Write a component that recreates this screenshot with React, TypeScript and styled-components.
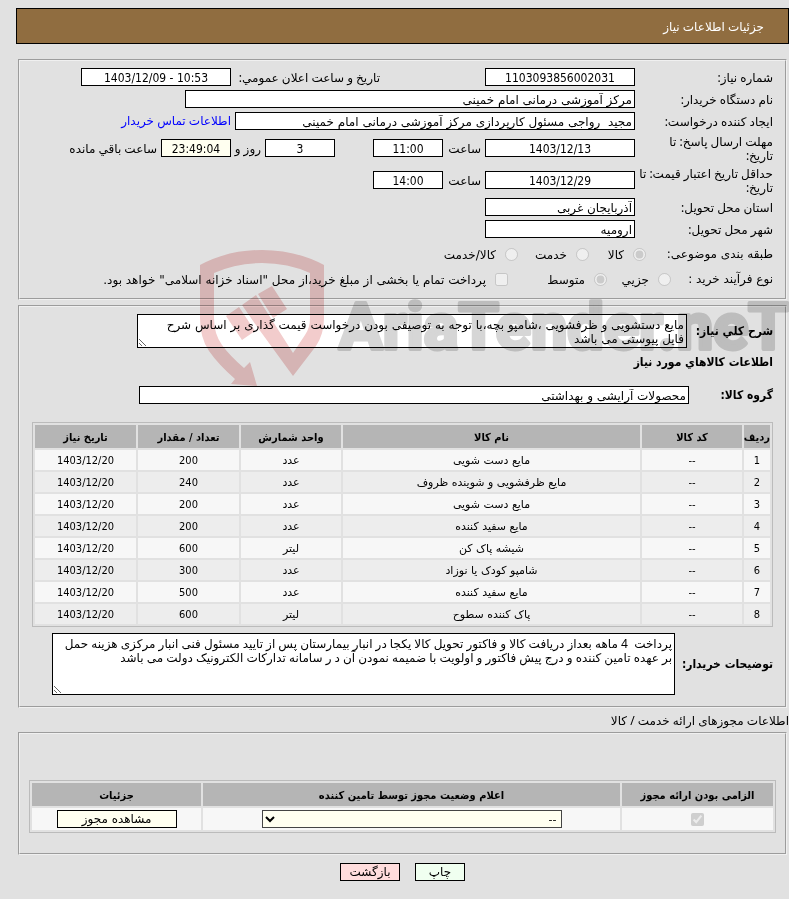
import React from "react";
import styled, { createGlobalStyle, css } from "styled-components";

const digits = `"DejaVu Sans Condensed", "DejaVu Sans", sans-serif`;
const compact = `"Noto Sans", "DejaVu Sans", sans-serif`;
const regular = `"DejaVu Sans", sans-serif`;

const GlobalStyle = createGlobalStyle`
  * { box-sizing: border-box; }
  body {
    margin: 0;
    background: #e1e1e1;
    color: #000;
    font: 12px/14px ${regular};
  }
  input, textarea, select, button { font: inherit; color: inherit; }
`;

const Page = styled.main`
  position: relative;
  padding: 8px 0 18px 16px;
  overflow: hidden;
`;

const TitleBar = styled.header`
  display: flex;
  align-items: center;
  height: 36px;
  margin-bottom: 15px;
  padding: 2px 24px 0;
  border: 1px solid #000;
  background: #906d40;
  color: #fff;
`;

const Title = styled.h1`
  margin: 0;
  font: 12px/14px ${compact};
`;

const Panel = styled.section<{ $pad: string }>`
  margin: 0 2px 5px;
  padding: ${(p) => p.$pad};
  border: 2px groove #f0f0f0;
`;

const Row = styled.div<{ $height?: number }>`
  display: flex;
  align-items: center;
  gap: 4px;
  height: ${(p) => p.$height ?? 22}px;
`;

const Label = styled.label<{ $width?: number }>`
  flex: none;
  width: ${(p) => (p.$width ? `${p.$width}px` : "auto")};
  padding-top: 1px;
  font-family: ${compact};
  white-space: nowrap;
`;

const Caption = styled.span<{ $width: number }>`
  flex: none;
  width: ${(p) => p.$width}px;
  white-space: nowrap;
`;

const Field = styled.input<{ $width: number; $numeric?: boolean; $cream?: boolean }>`
  flex: 0 1 ${(p) => p.$width}px;
  min-width: 0;
  height: 18px;
  padding: 1px 2px 0;
  border: 1px solid #000;
  border-radius: 0;
  background: ${(p) => (p.$cream ? "#fffff0" : "#fff")};
  ${(p) =>
    p.$numeric &&
    css`
      font-family: ${digits};
      text-align: center;
    `}
`;

const ContactLink = styled.a`
  color: #00f;
  font-family: ${compact};
  text-decoration: none;
  white-space: nowrap;
`;

const Spacer = styled.span<{ $width: number }>`
  flex: none;
  width: ${(p) => p.$width}px;
`;

const Choice = styled.label<{ $width?: number }>`
  display: flex;
  flex: none;
  align-items: center;
  gap: 9px;
  width: ${(p) => (p.$width ? `${p.$width}px` : "auto")};
  white-space: nowrap;

  input { width: 13px; height: 13px; margin: 0; }
  span { padding-top: 2px; }
`;

const Strong = styled.label<{ $width: number }>`
  flex: none;
  width: ${(p) => p.$width}px;
  font-family: ${digits};
  font-weight: bold;
  white-space: nowrap;
`;

const Notes = styled.textarea<{ $width: number; $height: number; $compact?: boolean }>`
  flex: 0 1 ${(p) => p.$width}px;
  min-width: 0;
  height: ${(p) => p.$height}px;
  padding: 3px 2px 0;
  border: 1px solid #000;
  background: #fff;
  font: 12px/14px ${(p) => (p.$compact ? compact : regular)};
  overflow: hidden;
`;

const SubHeading = styled.h2`
  margin: 0;
  font: bold 12px/28px ${digits};
`;

const TableWrap = styled.div`
  margin: 8px 0 6px;
`;

const Grid = styled.table`
  width: 100%;
  border: 1px solid #bbb;
  border-collapse: separate;
  border-spacing: 2px;
  table-layout: fixed;
  font-size: 11px;
  text-align: center;

  th, td { padding: 2px 0 0; }
  th { height: 23px; background: #b5b5b5; white-space: nowrap; font-family: ${digits}; }
  td { height: 20px; background: #f7f7f7; }
  tbody tr:nth-child(even) td { background: #ededed; }
`;

const Col = styled.col<{ $width?: number }>`
  width: ${(p) => (p.$width ? `${p.$width}px` : "auto")};
`;

const NumCell = styled.td`
  font-family: ${digits};
`;

const SectionNote = styled.p`
  margin: 0 0 3px;
  font: 12px/16px ${compact};
`;

const PermitCell = styled.td`
  && { height: 22px; padding: 0; }

  input { display: block; width: 13px; height: 13px; margin: 0 auto; }
`;

const Status = styled.select`
  display: block;
  width: 300px;
  max-width: 100%;
  height: 18px;
  margin: 0 auto;
  padding: 0;
  border: 1px solid #444;
  border-radius: 0;
  background-color: #fffff0;
`;

const Button = styled.button<{ $width: number; $tone: string }>`
  width: ${(p) => p.$width}px;
  height: 18px;
  padding: 0;
  border: 1px solid #000;
  background: ${(p) => p.$tone};
  font-size: 12px;
  line-height: 16px;
`;

const Actions = styled.footer`
  display: flex;
  justify-content: center;
  gap: 15px;
  margin-top: 8px;
`;

const Watermark = styled.svg`
  position: absolute;
  top: 248px;
  left: 198px;
  width: 600px;
  height: 140px;
  mix-blend-mode: multiply;
  pointer-events: none;
`;

const WordMark = styled.text`
  fill: #d6d6d6;
  stroke: #d6d6d6;
  stroke-width: 4px;
  stroke-linejoin: round;
  font: bold 65px Roboto, sans-serif;
`;

const items = [
  ["مایع دست شویی", "200", "عدد"],
  ["مایع ظرفشویی و شوینده ظروف", "240", "عدد"],
  ["مایع دست شویی", "200", "عدد"],
  ["مایع سفید کننده", "200", "عدد"],
  ["شیشه پاک کن", "600", "لیتر"],
  ["شامپو کودک یا نوزاد", "300", "عدد"],
  ["مایع سفید کننده", "500", "عدد"],
  ["پاک کننده سطوح", "600", "لیتر"],
];

function ItemsTable() {
  return (
    <TableWrap>
      <Grid>
        <colgroup>
          <Col $width={26} />
          <Col $width={100} />
          <Col />
          <Col $width={100} />
          <Col $width={101} />
          <Col $width={101} />
        </colgroup>
        <thead>
          <tr>
            <th>ردیف</th>
            <th>کد کالا</th>
            <th>نام کالا</th>
            <th>واحد شمارش</th>
            <th>تعداد / مقدار</th>
            <th>تاریخ نیاز</th>
          </tr>
        </thead>
        <tbody>
          {items.map(([name, amount, unit], i) => (
            <tr key={i}>
              <NumCell>{i + 1}</NumCell>
              <NumCell>--</NumCell>
              <td>{name}</td>
              <td>{unit}</td>
              <NumCell>{amount}</NumCell>
              <NumCell>1403/12/20</NumCell>
            </tr>
          ))}
        </tbody>
      </Grid>
    </TableWrap>
  );
}

function PermitsTable() {
  return (
    <Grid>
      <colgroup>
        <Col $width={151} />
        <Col />
        <Col $width={169} />
      </colgroup>
      <thead>
        <tr>
          <th>الزامی بودن ارائه مجوز</th>
          <th>اعلام وضعیت مجوز توسط تامین کننده</th>
          <th>جزئیات</th>
        </tr>
      </thead>
      <tbody>
        <tr>
          <PermitCell>
            <input type="checkbox" aria-label="الزامی بودن ارائه مجوز" disabled defaultChecked />
          </PermitCell>
          <PermitCell>
            <Status aria-label="اعلام وضعیت مجوز">
              <option>--</option>
            </Status>
          </PermitCell>
          <PermitCell>
            <Button type="button" $width={120} $tone="#fffff0">مشاهده مجوز</Button>
          </PermitCell>
        </tr>
      </tbody>
    </Grid>
  );
}

export default function App() {
  return (
    <Page dir="rtl" lang="fa">
      <GlobalStyle />
      <TitleBar>
        <Title>جزئیات اطلاعات نیاز</Title>
      </TitleBar>

      <Panel $pad="5px 12px 8px">
        <Row>
          <Label $width={134} htmlFor="number">شماره نیاز:</Label>
          <Field id="number" $width={150} $numeric readOnly defaultValue="1103093856002031" />
          <Spacer $width={97} />
          <Label $width={145} htmlFor="announced">تاریخ و ساعت اعلان عمومي:</Label>
          <Field id="announced" dir="ltr" $width={150} $numeric readOnly defaultValue="1403/12/09 - 10:53" />
        </Row>
        <Row>
          <Label $width={134} htmlFor="org">نام دستگاه خریدار:</Label>
          <Field id="org" $width={450} readOnly defaultValue="مرکز آموزشی درمانی امام خمینی" />
        </Row>
        <Row>
          <Label $width={134} htmlFor="creator">ایجاد کننده درخواست:</Label>
          <Field id="creator" $width={400} readOnly defaultValue="مجید  رواجی مسئول کارپردازی مرکز آموزشی درمانی امام خمینی" />
          <ContactLink href="#contact">اطلاعات تماس خریدار</ContactLink>
        </Row>
        <Row $height={32}>
          <Label $width={134} htmlFor="deadline">مهلت ارسال پاسخ: تا<br />تاریخ:</Label>
          <Field id="deadline" $width={150} $numeric readOnly defaultValue="1403/12/13" />
          <Label $width={34} htmlFor="deadlineHour">ساعت</Label>
          <Field id="deadlineHour" $width={70} $numeric readOnly defaultValue="11:00" />
          <Spacer $width={30} />
          <Field id="days" $width={70} $numeric readOnly defaultValue="3" />
          <Label $width={26} htmlFor="days">روز و</Label>
          <Field id="left" $width={70} $numeric $cream readOnly defaultValue="23:49:04" />
          <Label htmlFor="left">ساعت باقي مانده</Label>
        </Row>
        <Row $height={32}>
          <Label $width={134} htmlFor="validity">حداقل تاریخ اعتبار قیمت: تا<br />تاریخ:</Label>
          <Field id="validity" $width={150} $numeric readOnly defaultValue="1403/12/29" />
          <Label $width={34} htmlFor="validityHour">ساعت</Label>
          <Field id="validityHour" $width={70} $numeric readOnly defaultValue="14:00" />
        </Row>
        <Row>
          <Label $width={134} htmlFor="province">استان محل تحویل:</Label>
          <Field id="province" $width={150} readOnly defaultValue="آذربایجان غربی" />
        </Row>
        <Row>
          <Label $width={134} htmlFor="city">شهر محل تحویل:</Label>
          <Field id="city" $width={150} readOnly defaultValue="ارومیه" />
        </Row>
        <Row $height={28}>
          <Caption $width={123}>طبقه بندی موضوعی:</Caption>
          <Choice $width={53}><input type="radio" name="subject" disabled defaultChecked /><span>کالا</span></Choice>
          <Choice $width={67}><input type="radio" name="subject" disabled /><span>خدمت</span></Choice>
          <Choice><input type="radio" name="subject" disabled /><span>کالا/خدمت</span></Choice>
        </Row>
        <Row $height={22}>
          <Caption $width={98}>نوع فرآیند خرید :</Caption>
          <Choice $width={60}><input type="radio" name="process" disabled /><span>جزیي</span></Choice>
          <Choice $width={95}><input type="radio" name="process" disabled defaultChecked /><span>متوسط</span></Choice>
          <Choice>
            <input type="checkbox" disabled />
            <span>پرداخت تمام یا بخشی از مبلغ خرید،از محل "اسناد خزانه اسلامی" خواهد بود.</span>
          </Choice>
        </Row>
      </Panel>

      <Panel $pad="7px 12px 11px">
        <Row $height={34}>
          <Strong $width={82} htmlFor="summary">شرح کلي نیاز:</Strong>
          <Notes
            id="summary"
            $width={550}
            $height={34}
            readOnly
            defaultValue={
              "مایع دستشویی و ظرفشویی ،شامپو بچه،با توجه به توصیفی بودن درخواست قیمت گذاری بر اساس شرح\nفایل پیوستی می باشد"
            }
          />
        </Row>
        <SubHeading>اطلاعات کالاهاي مورد نیاز</SubHeading>
        <Row $height={38}>
          <Strong $width={80} htmlFor="group">گروه کالا:</Strong>
          <Field id="group" $width={550} readOnly defaultValue="محصولات آرایشی و بهداشتی" />
        </Row>
        <ItemsTable />
        <Row $height={62}>
          <Strong $width={94} htmlFor="remarks">توضیحات خریدار:</Strong>
          <Notes
            id="remarks"
            $width={623}
            $height={62}
            $compact
            readOnly
            defaultValue="پرداخت  4 ماهه بعداز دریافت کالا و فاکتور تحویل کالا یکجا در انبار بیمارستان پس از تایید مسئول فنی انبار مرکزی هزینه حمل بر عهده تامین کننده و درج پیش فاکتور و اولویت با ضمیمه نمودن آن د ر سامانه تدارکات الکترونیک دولت می باشد"
          />
        </Row>
      </Panel>

      <SectionNote>اطلاعات مجوزهای ارائه خدمت / کالا</SectionNote>

      <Panel $pad="46px 9px 20px">
        <PermitsTable />
      </Panel>

      <Actions>
        <Button type="button" $width={50} $tone="#f0fff0">چاپ</Button>
        <Button type="button" $width={60} $tone="#ffdddd">بازگشت</Button>
      </Actions>

      <Watermark viewBox="198 248 600 140" direction="ltr" aria-hidden="true">
        <g fill="#f2cccc">
          <path d="M200 265Q228 250 262 250T324 265V318Q324 334 316 346L293 376L258 328L242 305L256 295L293 353L305 335Q310 328 310 318V273Q288 263 262 263T214 273V318Q214 334 222 345Q230 356 244 368L250 362L257 386L231 384L235 379Q218 364 209 351Q200 338 200 318Z" />
          <path d="M226 316L239 307L255 331L242 340Z" />
          <path d="M258 294L272 286L287 309L273 318Z" />
        </g>
        <WordMark x="339" y="349">AriaTender.neT</WordMark>
      </Watermark>
    </Page>
  );
}
